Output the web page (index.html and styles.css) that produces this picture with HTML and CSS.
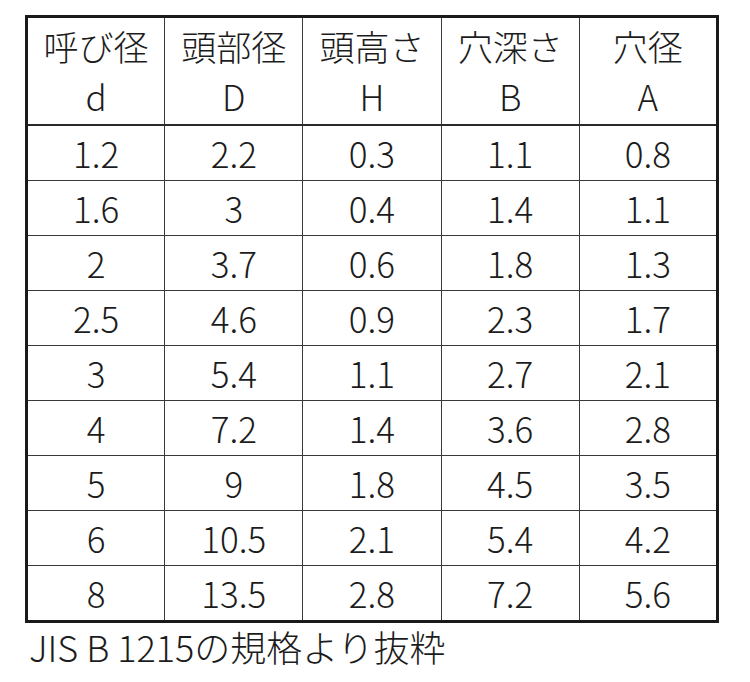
FILE: index.html
```html
<!DOCTYPE html>
<html lang="ja">
<head>
<meta charset="utf-8">
<link rel="stylesheet" href="styles.css">
</head>
<body>
<div class="wrap">
<table class="spec">
  <thead>
    <tr class="head">
      <th>呼び径<br>d</th>
      <th>頭部径<br>D</th>
      <th>頭高さ<br>H</th>
      <th>穴深さ<br>B</th>
      <th>穴径<br>A</th>
    </tr>
  </thead>
  <tbody>
    <tr><td>1.2</td><td>2.2</td><td>0.3</td><td>1.1</td><td>0.8</td></tr>
    <tr><td>1.6</td><td>3</td><td>0.4</td><td>1.4</td><td>1.1</td></tr>
    <tr><td>2</td><td>3.7</td><td>0.6</td><td>1.8</td><td>1.3</td></tr>
    <tr><td>2.5</td><td>4.6</td><td>0.9</td><td>2.3</td><td>1.7</td></tr>
    <tr><td>3</td><td>5.4</td><td>1.1</td><td>2.7</td><td>2.1</td></tr>
    <tr><td>4</td><td>7.2</td><td>1.4</td><td>3.6</td><td>2.8</td></tr>
    <tr><td>5</td><td>9</td><td>1.8</td><td>4.5</td><td>3.5</td></tr>
    <tr><td>6</td><td>10.5</td><td>2.1</td><td>5.4</td><td>4.2</td></tr>
    <tr><td>8</td><td>13.5</td><td>2.8</td><td>7.2</td><td>5.6</td></tr>
  </tbody>
</table>
<p class="note">JIS B 1215の規格より抜粋</p>
</div>
</body>
</html>
```
FILE: styles.css
```css
html, body {
  margin: 0;
  padding: 0;
  background: #fff;
}
body {
  font-family: "Noto Sans CJK JP", "Noto Sans", sans-serif;
  color: #1c1c1c;
}
.wrap {
  padding: 15px 0 0 25px;
}
.spec {
  border-collapse: collapse;
  width: 694px;
  table-layout: fixed;
  border: 3px solid #1a1a1a;
}
.spec th,
.spec td {
  border: 1px solid #3a3a3a;
  text-align: center;
  padding: 0;
  font-size: 35px;
  font-weight: 300;
  color: #1c1c1c;
}
.spec th {
  height: 106px;
  line-height: 50px;
  border-bottom: 2px solid #2a2a2a;
}
.spec td {
  height: 54px;
  line-height: 54px;
}
.note {
  margin: 0 0 0 4px;
  font-size: 36px;
  font-weight: 300;
  line-height: 46px;
  color: #1c1c1c;
}
```
